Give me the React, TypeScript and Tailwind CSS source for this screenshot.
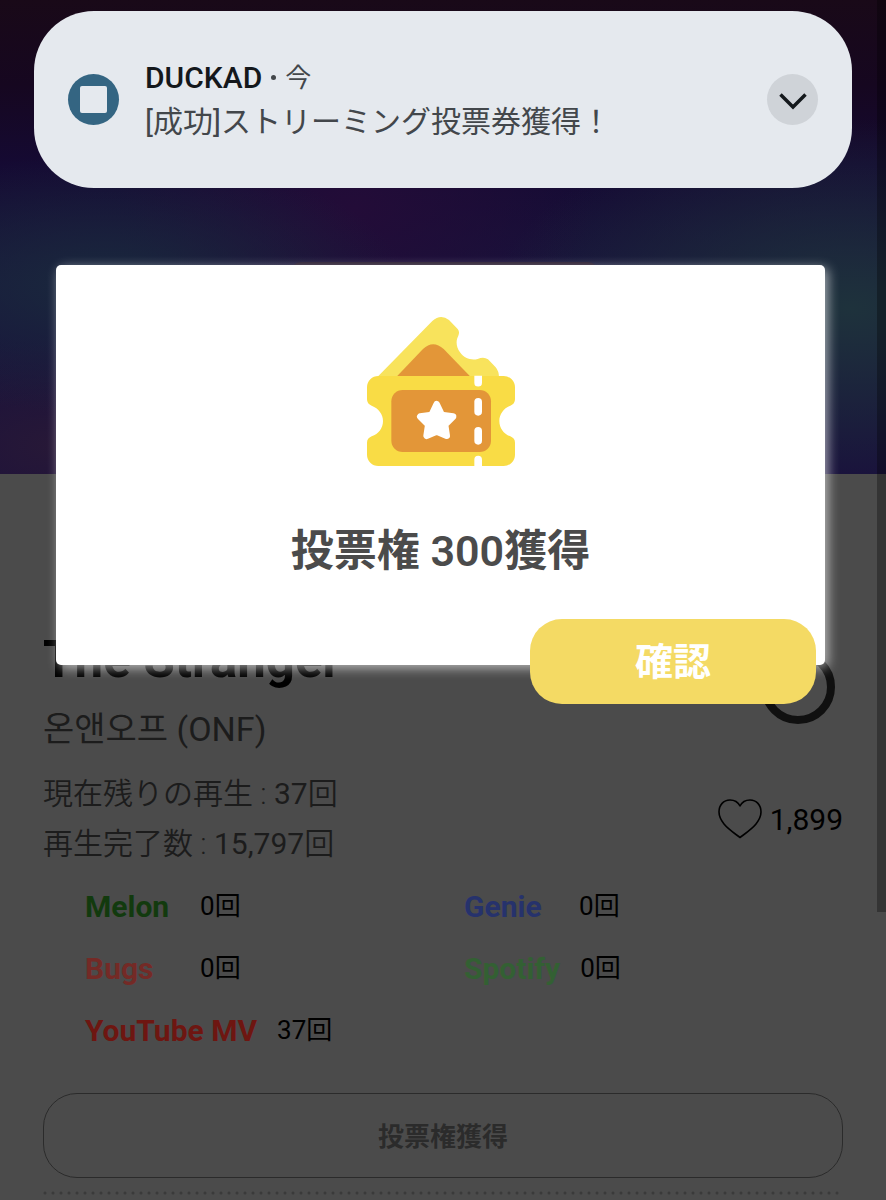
import React from "react";

type Service = { name: string; count: number; color: string };

const services: Service[] = [
  { name: "Melon", count: 0, color: "text-[#123a0e]" },
  { name: "Genie", count: 0, color: "text-[#26326c]" },
  { name: "Bugs", count: 0, color: "text-[#742a26]" },
  { name: "Spotify", count: 0, color: "text-[#336033]" },
  { name: "YouTube MV", count: 37, color: "text-[#6e1611]" },
];

function TicketIcon() {
  return (
    <svg viewBox="78 48 444 450" className="h-[150px] w-[148px] shrink-0" aria-hidden="true">
      <path
        fill="#f8e35c"
        d="M104 236 L274 63 Q299 40 324 60 L350 87 Q357 95 352 107 C344 122 345 141 357 157 C370 176 392 182 410 177 Q428 169 441 178 L464 202 Q474 214 474 232 Z"
      />
      <path fill="#e39638" d="M168 229 L246 147 Q276 118 308 147 L387 229 Z" />
      <path
        fill="#f9dc45"
        d="M112 228 H488 A34 34 0 0 1 522 262 V298 Q522 312 508 317 C488 325 475 343 475 363 C475 384 488 402 508 409 Q522 415 522 428 V464 A34 34 0 0 1 488 498 H112 A34 34 0 0 1 78 464 V428 Q78 415 92 409 C113 402 126 384 126 363 C126 343 113 325 92 317 Q78 312 78 298 V262 A34 34 0 0 1 112 228 Z"
      />
      <rect x="151" y="270" width="299" height="186" rx="34" fill="#e39638" />
      <g fill="#fff">
        <path d="M400 227 H423 V248 A11.500 11.500 0 0 1 400 248 Z" />
        <rect x="400" y="294" width="23" height="53" rx="11.500" />
        <rect x="400" y="381" width="23" height="53" rx="11.500" />
        <path d="M400 499 V479 A11.500 11.500 0 0 1 423 479 V499 Z" />
      </g>
      <path
        fill="#fff"
        stroke="#fff"
        strokeWidth="20"
        strokeLinejoin="round"
        d="M287 313 L302 345 L336 350 L312 374 L317 407 L287 394 L257 407 L262 374 L238 350 L272 345 Z"
      />
    </svg>
  );
}

function Notification() {
  return (
    <section className="absolute inset-x-[34px] top-[11px] flex h-[177px] items-center rounded-[60px] bg-[#e5e9ee] px-[34px]">
      <span className="flex size-[51px] shrink-0 items-center justify-center rounded-full bg-[#346582]">
        <span className="size-[27px] rounded-[2px] bg-[#e5e9ee]" />
      </span>
      <div className="ml-[26px] flex-1">
        <p className="flex items-center text-[30px] leading-[44px] text-[#43474b]">
          <span className="font-medium text-[#14181c]">DUCKAD</span>
          <span className="mx-[9px] size-[5px] rounded-full bg-[#43474b]" />
          <span className="text-[26px]">今</span>
        </p>
        <p className="text-[30px] leading-[44px] text-[#43474b]">[成功]ストリーミング投票券獲得！</p>
      </div>
      <button
        type="button"
        aria-label="展開"
        className="flex size-[51px] shrink-0 items-center justify-center rounded-full bg-[#cfd3d8]"
      >
        <svg viewBox="0 0 28 17" className="mt-1 h-[17px] w-7" fill="none" stroke="#14181c" strokeWidth="3.500">
          <path d="M1.500 1.500 L14 14 L26.500 1.500" />
        </svg>
      </button>
    </section>
  );
}

function Dialog() {
  return (
    <div
      role="dialog"
      aria-labelledby="dialog-title"
      className="absolute top-[265px] right-[61px] left-[56px] flex h-[400px] flex-col items-center rounded-[5px] bg-white pt-[51px] shadow-[3px_3px_12px_rgba(255,255,255,0.6)]"
    >
      <TicketIcon />
      <h2 id="dialog-title" className="mt-[55px] text-[43px] leading-[60px] font-semibold text-[#4b4b4b]">
        投票権 300獲得
      </h2>
      <button
        type="button"
        className="mt-[38px] mr-[9px] h-[85px] w-[286px] shrink-0 self-end rounded-[32px] bg-[#f4da64] pt-[2px] text-[38px] font-bold text-white"
      >
        確認
      </button>
    </div>
  );
}

function Hero() {
  return (
    <div className="flex h-[474px] justify-center overflow-hidden bg-[radial-gradient(ellipse_300px_130px_at_12%_60%,#1a293d_0%,transparent_100%),radial-gradient(ellipse_360px_190px_at_96%_65%,#1e323c_0%,transparent_100%),radial-gradient(ellipse_240px_160px_at_40%_44%,#230c38_0%,transparent_100%),radial-gradient(ellipse_200px_110px_at_6%_94%,#271837_0%,transparent_100%),linear-gradient(#190918_0%,#160720_18%,#150a33_35%,#18143c_60%,#190f3c_100%)] pt-[262px] pr-[5px] pl-2">
      <div className="size-[307px] shrink-0 rounded-[10px] bg-[#271a2e]" />
    </div>
  );
}

export default function App() {
  return (
    <div
      lang="ja"
      className="relative min-h-screen overflow-hidden bg-[#4b4b4b] font-['Roboto','Noto_Sans_CJK_JP','Noto_Sans_CJK_KR',sans-serif]"
    >
      <Hero />
      <main className="px-[43px]">
        <div className="flex items-start justify-between pt-[152px]">
          <div>
            <h1 className="text-[51px] leading-[68px] font-bold text-black">The Stranger</h1>
            <p lang="ko" className="mt-[10px] text-[34px] leading-[50px] text-[#1c1c1c]">
              온앤오프 (ONF)
            </p>
          </div>
          <span className="mt-6 mr-2 size-[74px] rounded-full border-8 border-[#101010]" />
        </div>
        <div className="mt-[15px] flex items-center justify-between">
          <div className="text-[30px] leading-[50px] font-[350] text-[#1c1c1c]">
            <p>
              現在残りの再生 : <span className="font-normal">37</span>回
            </p>
            <p>
              再生完了数 : <span className="font-normal">15,797</span>回
            </p>
          </div>
          <button type="button" className="flex items-center gap-2 text-[30px] text-black">
            <svg viewBox="0 0 44 40" className="h-10 w-11" fill="none" stroke="currentColor" strokeWidth="1.600">
              <path
                strokeLinejoin="round"
                d="M22 38.500 C16 34 10 30 6 25 C2.500 20.500 1 17 1 13 C1 6 5.500 1 12 1 C16.500 1 20 3 22 7 C24 3 27.500 1 32 1 C38.500 1 43 6 43 13 C43 17 41.500 20.500 38 25 C34 30 28 34 22 38.500 Z"
              />
            </svg>
            1,899
          </button>
        </div>
        <ul className="mt-[6px] grid grid-cols-2 pl-[42px]">
          {services.map((s) => (
            <li key={s.name} className="flex h-[62px] items-center gap-5">
              <span className={`min-w-[95px] text-[30px] font-bold ${s.color}`}>{s.name}</span>
              <span className="text-[26px] text-black">{s.count}回</span>
            </li>
          ))}
        </ul>
        <button
          type="button"
          className="mt-[32px] block h-[85px] w-full rounded-[34px] border border-[#2b2b2b] pt-1 text-[26px] font-bold text-[#2b2b2b]"
        >
          投票権獲得
        </button>
        <svg className="mt-[13px] block h-1 w-full" aria-hidden="true">
          <line x1="2" y1="2" x2="100%" y2="2" stroke="#3a3a3a" strokeWidth="3" strokeLinecap="round" strokeDasharray="0 8" />
        </svg>
      </main>
      <div className="absolute top-0 right-0 h-[912px] w-[9px] bg-black/30" />
      <Dialog />
      <Notification />
    </div>
  );
}
